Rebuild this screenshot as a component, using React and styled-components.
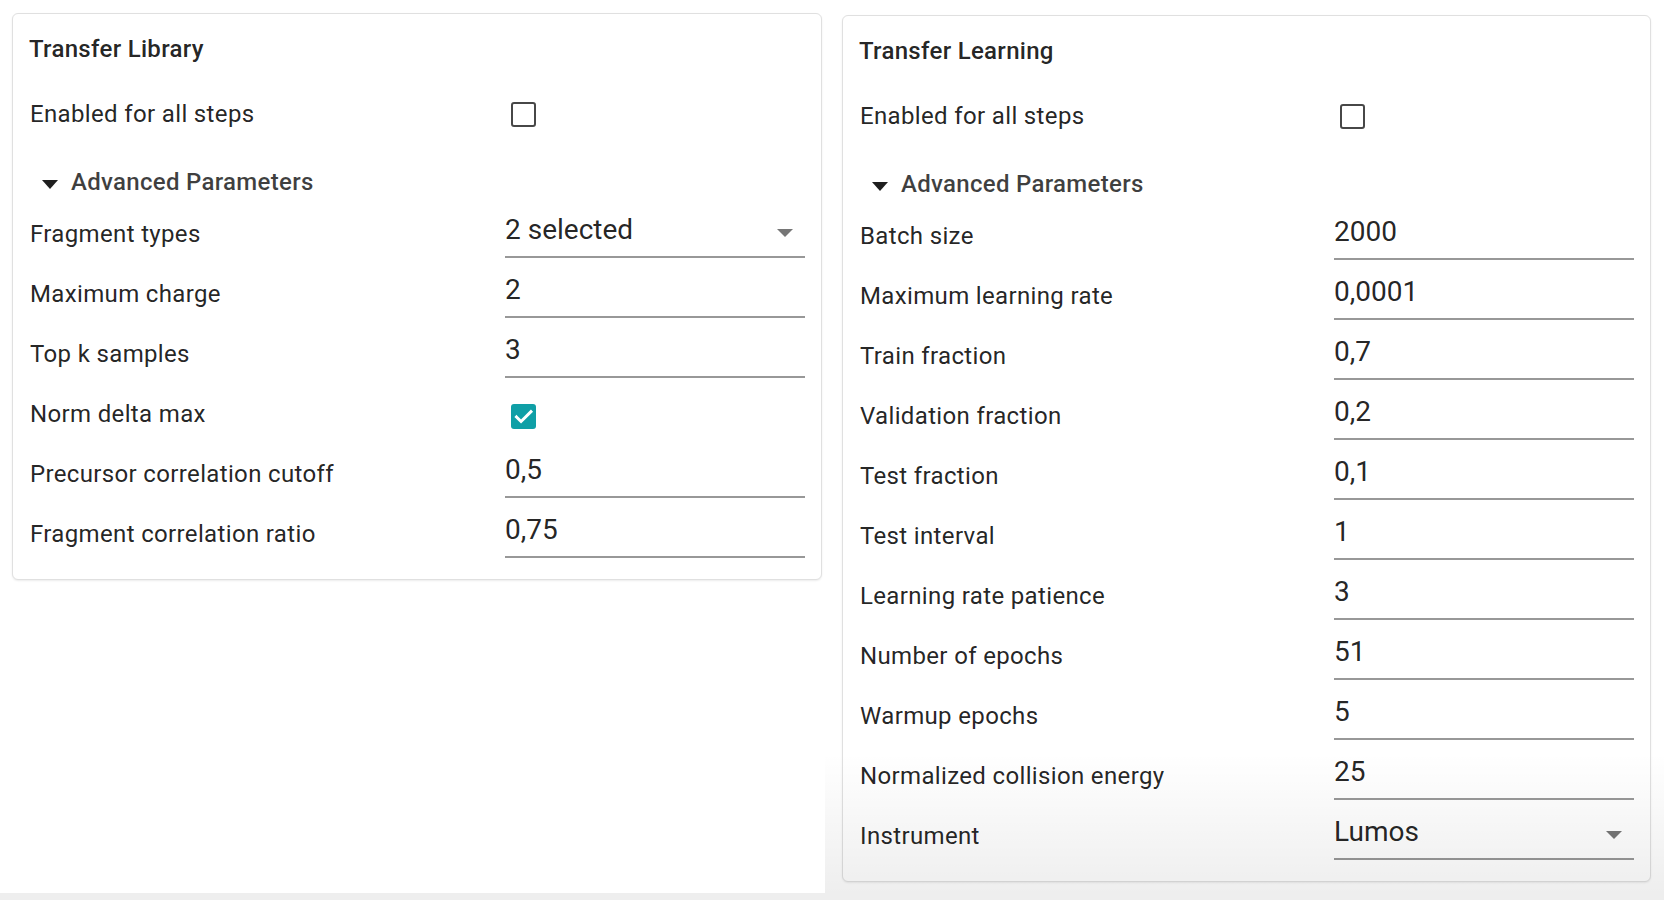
import React from 'react'
import styled, { createGlobalStyle } from 'styled-components'

const GlobalStyle = createGlobalStyle`
  * {
    box-sizing: border-box;
  }
  body {
    margin: 0;
    font-family: Roboto, 'Liberation Sans', Arial, sans-serif;
    color: rgba(0, 0, 0, 0.87);
    background: #eeeeee;
  }
`

const library = [
  { label: 'Fragment types', value: '2 selected', select: true },
  { label: 'Maximum charge', value: '2' },
  { label: 'Top k samples', value: '3' },
  { label: 'Norm delta max', checked: true },
  { label: 'Precursor correlation cutoff', value: '0,5' },
  { label: 'Fragment correlation ratio', value: '0,75' },
]

const learning = [
  { label: 'Batch size', value: '2000' },
  { label: 'Maximum learning rate', value: '0,0001' },
  { label: 'Train fraction', value: '0,7' },
  { label: 'Validation fraction', value: '0,2' },
  { label: 'Test fraction', value: '0,1' },
  { label: 'Test interval', value: '1' },
  { label: 'Learning rate patience', value: '3' },
  { label: 'Number of epochs', value: '51' },
  { label: 'Warmup epochs', value: '5' },
  { label: 'Normalized collision energy', value: '25' },
  { label: 'Instrument', value: 'Lumos', select: true },
]

function Checkbox({ checked, lift = 9 }) {
  return (
    <Box $checked={checked} $lift={lift}>
      {checked && (
        <svg width="21" height="21" viewBox="0 0 24 24">
          <path
            d="M4 12.5l5.2 5.2L20.5 6.5"
            fill="none"
            stroke="#fff"
            strokeWidth="3.4"
            strokeLinecap="square"
          />
        </svg>
      )}
    </Box>
  )
}

function Field({ item }) {
  if (item.checked !== undefined) {
    return <Checkbox checked={item.checked} />
  }
  return (
    <Input>
      <span>{item.value}</span>
      {item.select && <Caret />}
    </Input>
  )
}

function SettingsPanel({ title, items }) {
  return (
    <Panel>
      <Title>{title}</Title>
      <Row>
        <Label>Enabled for all steps</Label>
        <Checkbox checked={false} lift={11} />
      </Row>
      <Summary>
        <Marker />
        Advanced Parameters
      </Summary>
      {items.map((item) => (
        <Row key={item.label}>
          <Label>{item.label}</Label>
          <Field item={item} />
        </Row>
      ))}
    </Panel>
  )
}

export default function App() {
  return (
    <Page>
      <GlobalStyle />
      <Columns>
        <Column $top={13} $left={12} $right={3}>
          <SettingsPanel title="Transfer Library" items={library} />
        </Column>
        <Column $top={15} $left={17} $right={13} $fade>
          <SettingsPanel title="Transfer Learning" items={learning} />
        </Column>
      </Columns>
    </Page>
  )
}

const Page = styled.div`
  min-height: 100vh;
  background: #eeeeee;
`

const Columns = styled.div`
  display: grid;
  grid-template-columns: 825px 1fr;
  height: 893px;
  background: #ffffff;
`

const Column = styled.div`
  position: relative;
  padding: ${(p) => `${p.$top}px ${p.$right}px 0 ${p.$left}px`};

  &::after {
    content: '';
    display: ${(p) => (p.$fade ? 'block' : 'none')};
    position: absolute;
    left: 0;
    right: 0;
    bottom: 0;
    height: 140px;
    background: linear-gradient(rgba(0, 0, 0, 0), rgba(0, 0, 0, 0.065));
    pointer-events: none;
  }
`

const Panel = styled.section`
  border: 1px solid #e0e0e0;
  border-radius: 6px;
  box-shadow: 0 1px 2px rgba(0, 0, 0, 0.08);
  background: #ffffff;
  padding: 17px 16px 21px;
`

const Title = styled.h2`
  margin: 0 0 10px;
  font-size: 24px;
  font-weight: 500;
  line-height: 37px;
  letter-spacing: 0.3px;
  color: rgba(0, 0, 0, 0.87);
`

const Row = styled.div`
  display: grid;
  grid-template-columns: 1fr 300px;
  align-items: end;
  height: 60px;
`

const Label = styled.div`
  font-size: 24px;
  line-height: 33px;
  margin: 0 0 7px 1px;
  letter-spacing: 0.35px;
`

const Summary = styled.div`
  display: flex;
  align-items: center;
  margin-top: 29px;
  padding-left: 13px;
  font-size: 24px;
  font-weight: 500;
  line-height: 31px;
  color: rgba(0, 0, 0, 0.75);
  letter-spacing: 0.3px;
`

const Marker = styled.span`
  width: 0;
  height: 0;
  margin: 4px 13px 0 0;
  border-left: 8px solid transparent;
  border-right: 8px solid transparent;
  border-top: 9px solid #1e1e1e;
`

const Box = styled.div`
  width: 25px;
  height: 25px;
  margin: ${(p) => `0 0 ${p.$lift}px 6px`};
  border-radius: 3px;
  display: flex;
  align-items: center;
  justify-content: center;
  border: ${(p) => (p.$checked ? 'none' : '2.5px solid rgba(0, 0, 0, 0.72)')};
  background: ${(p) => (p.$checked ? '#0f9fa6' : 'transparent')};
`

const Input = styled.div`
  display: flex;
  align-items: center;
  justify-content: space-between;
  height: 51px;
  padding: 0 12px 5px 0;
  border-bottom: 2px solid #989898;
  font-size: 28px;
  color: rgba(0, 0, 0, 0.87);
`

const Caret = styled.span`
  width: 0;
  height: 0;
  margin-top: 8px;
  border-left: 8px solid transparent;
  border-right: 8px solid transparent;
  border-top: 8px solid #767676;
`
